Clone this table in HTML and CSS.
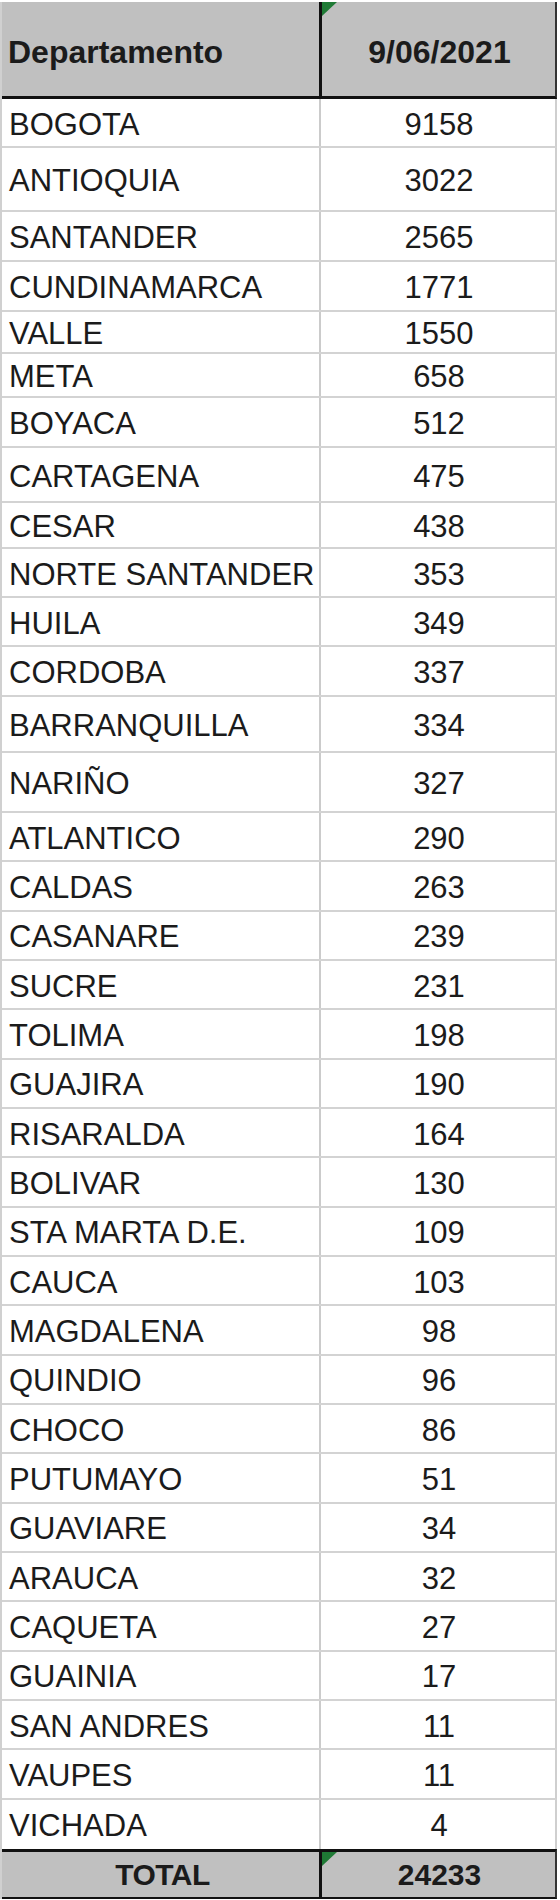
FILE: index.html
```html
<!DOCTYPE html>
<html lang="es">
<head>
<meta charset="utf-8">
<title>Departamento 9/06/2021</title>
<link rel="stylesheet" href="styles.css">
</head>
<body>
<div class="sheet">
  <div class="row head">
    <div class="cell name">Departamento</div>
    <div class="cell val"><span class="flag"></span>9/06/2021</div>
  </div>
  <div class="row h49"><div class="cell name">BOGOTA</div><div class="cell val">9158</div></div>
  <div class="row h64"><div class="cell name">ANTIOQUIA</div><div class="cell val">3022</div></div>
  <div class="row h50"><div class="cell name">SANTANDER</div><div class="cell val">2565</div></div>
  <div class="row h50"><div class="cell name">CUNDINAMARCA</div><div class="cell val">1771</div></div>
  <div class="row h42"><div class="cell name">VALLE</div><div class="cell val">1550</div></div>
  <div class="row h44"><div class="cell name">META</div><div class="cell val">658</div></div>
  <div class="row h50"><div class="cell name">BOYACA</div><div class="cell val">512</div></div>
  <div class="row h55"><div class="cell name">CARTAGENA</div><div class="cell val">475</div></div>
  <div class="row h46"><div class="cell name">CESAR</div><div class="cell val">438</div></div>
  <div class="row h49"><div class="cell name">NORTE SANTANDER</div><div class="cell val">353</div></div>
  <div class="row h49"><div class="cell name">HUILA</div><div class="cell val">349</div></div>
  <div class="row h50"><div class="cell name">CORDOBA</div><div class="cell val">337</div></div>
  <div class="row h56"><div class="cell name">BARRANQUILLA</div><div class="cell val">334</div></div>
  <div class="row h60"><div class="cell name">NARIÑO</div><div class="cell val">327</div></div>
  <div class="row"><div class="cell name">ATLANTICO</div><div class="cell val">290</div></div>
  <div class="row"><div class="cell name">CALDAS</div><div class="cell val">263</div></div>
  <div class="row"><div class="cell name">CASANARE</div><div class="cell val">239</div></div>
  <div class="row"><div class="cell name">SUCRE</div><div class="cell val">231</div></div>
  <div class="row"><div class="cell name">TOLIMA</div><div class="cell val">198</div></div>
  <div class="row"><div class="cell name">GUAJIRA</div><div class="cell val">190</div></div>
  <div class="row"><div class="cell name">RISARALDA</div><div class="cell val">164</div></div>
  <div class="row"><div class="cell name">BOLIVAR</div><div class="cell val">130</div></div>
  <div class="row"><div class="cell name">STA MARTA D.E.</div><div class="cell val">109</div></div>
  <div class="row"><div class="cell name">CAUCA</div><div class="cell val">103</div></div>
  <div class="row"><div class="cell name">MAGDALENA</div><div class="cell val">98</div></div>
  <div class="row"><div class="cell name">QUINDIO</div><div class="cell val">96</div></div>
  <div class="row"><div class="cell name">CHOCO</div><div class="cell val">86</div></div>
  <div class="row"><div class="cell name">PUTUMAYO</div><div class="cell val">51</div></div>
  <div class="row"><div class="cell name">GUAVIARE</div><div class="cell val">34</div></div>
  <div class="row"><div class="cell name">ARAUCA</div><div class="cell val">32</div></div>
  <div class="row"><div class="cell name">CAQUETA</div><div class="cell val">27</div></div>
  <div class="row"><div class="cell name">GUAINIA</div><div class="cell val">17</div></div>
  <div class="row"><div class="cell name">SAN ANDRES</div><div class="cell val">11</div></div>
  <div class="row"><div class="cell name">VAUPES</div><div class="cell val">11</div></div>
  <div class="row last"><div class="cell name">VICHADA</div><div class="cell val">4</div></div>
  <div class="row total">
    <div class="cell name">TOTAL</div>
    <div class="cell val"><span class="flag"></span>24233</div>
  </div>
</div>
</body>
</html>
```
FILE: styles.css
```css
html, body {
  margin: 0;
  padding: 0;
  background: #ffffff;
}

.sheet {
  width: 557px;
  margin-top: 2px;
  box-sizing: border-box;
  border-left: 2px solid #d0d0d0;
  font-family: "Liberation Sans", Arial, sans-serif;
  color: #1b1b1b;
}

.row {
  display: grid;
  grid-template-columns: 317px 1fr;
  height: 49.33px;
  box-sizing: border-box;
  border-bottom: 2px solid #d3d3d3;
  border-right: 2px solid #cfcfcf;
}

.h42 { height: 42px; }
.h44 { height: 44px; }
.h46 { height: 46px; }
.h49 { height: 49px; }
.h50 { height: 50px; }
.h55 { height: 55px; }
.h56 { height: 56px; }
.h60 { height: 60px; }
.h64 { height: 64px; }

.cell {
  display: flex;
  align-items: center;
  font-size: 31px;
  line-height: 1;
  padding-top: 3px;
  box-sizing: border-box;
  position: relative;
}

.name {
  padding-left: 7px;
  white-space: nowrap;
}

.val {
  justify-content: center;
  border-left: 2px solid #cbcbcb;
  padding-left: 2px;
}

.row.last {
  border-bottom: none;
}

.head {
  height: 97px;
  background: #c0c0c0;
  border-bottom: 3px solid #111111;
  border-right: 2px solid #333333;
}

.head .cell {
  font-weight: bold;
  font-size: 32px;
  padding-top: 6px;
}

.head .name {
  padding-left: 6px;
}

.head .val,
.total .val {
  border-left: 3px solid #111111;
}

.total {
  height: 50px;
  background: #c0c0c0;
  border-top: 3px solid #111111;
  border-bottom: 2px solid #111111;
  border-right: 2px solid #333333;
}

.total .cell {
  font-weight: bold;
  font-size: 30px;
  padding-top: 2px;
}

.total .name {
  justify-content: center;
  padding-left: 4px;
  letter-spacing: -0.5px;
}

.flag {
  position: absolute;
  left: 0;
  top: 0;
  width: 15px;
  height: 14px;
  background: #1f7a35;
  clip-path: polygon(0 0, 100% 0, 0 100%);
}
```
